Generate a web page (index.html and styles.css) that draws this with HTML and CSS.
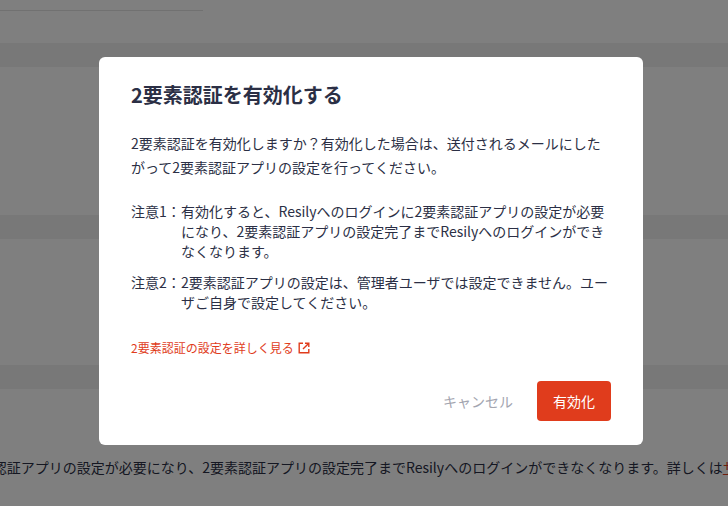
FILE: index.html
```html
<!DOCTYPE html>
<html lang="ja">
<head>
  <meta charset="UTF-8">
  <title>2要素認証</title>
  <link rel="stylesheet" href="styles.css">
</head>
<body>

  <!-- Page behind the modal -->
  <div class="page">
    <div class="top-rule"></div>
    <div class="band band-first"></div>
    <div class="band band-second"></div>
    <div class="band band-third"></div>
    <p class="page-note">2要素認証アプリの設定が必要になり、2要素認証アプリの設定完了までResilyへのログインができなくなります。詳しくは<a>サポート</a></p>
  </div>

  <!-- Modal -->
  <div class="overlay">
    <div class="modal">
      <h2>2要素認証を有効化する</h2>
      <p class="lead">2要素認証を有効化しますか？有効化した場合は、送付されるメールにしたがって2要素認証アプリの設定を行ってください。</p>
      <div class="note note-first">
        <span class="note-label">注意1：</span>
        <span>有効化すると、Resilyへのログインに2要素認証アプリの設定が必要になり、2要素認証アプリの設定完了までResilyへのログインができなくなります。</span>
      </div>
      <div class="note note-second">
        <span class="note-label">注意2：</span>
        <span>2要素認証アプリの設定は、管理者ユーザでは設定できません。ユーザご自身で設定してください。</span>
      </div>
      <a class="detail-link">2要素認証の設定を詳しく見る
        <svg width="12" height="12" viewBox="0 0 12 12" fill="none" stroke="#e03c1c" stroke-width="1.4">
          <path d="M5 1.2H1.2v9.6h9.6V7"/>
          <path d="M7 1.2h3.8V5M10.8 1.2L5 7"/>
        </svg>
      </a>
      <div class="actions">
        <button class="cancel">キャンセル</button>
        <button class="submit">有効化</button>
      </div>
    </div>
  </div>

</body>
</html>
```

FILE: styles.css
```css
html, body {
  margin: 0;
  height: 100%;
  overflow: hidden;
}
body {
  font-family: "Noto Sans CJK JP", "Noto Sans", sans-serif;
  background: #fff;
  color: #2b2f45;
}
.page {
  height: 506px;
  overflow: hidden;
  display: flex;
  flex-direction: column;
}
.top-rule {
  width: 203px;
  height: 1px;
  margin-top: 10px;
  background: #e2e2e2;
}
.band {
  height: 24px;
  flex-shrink: 0;
  background: #f0f0f0;
}
.band-first {
  margin-top: 32px;
}
.band-second {
  margin-top: 148px;
}
.band-third {
  margin-top: 126px;
}
.page-note {
  margin: 68px 0 0 -43px;
  font-size: 14px;
  line-height: 20px;
  white-space: nowrap;
}
.page-note a {
  color: #e03c1c;
  text-decoration: underline;
}
.overlay {
  box-sizing: border-box;
  position: absolute;
  top: 0;
  left: 0;
  width: 100%;
  height: 100%;
  padding: 0 0 4px 14px;
  background: rgba(0,0,0,0.5);
  display: flex;
  justify-content: center;
  align-items: center;
}
.modal {
  box-sizing: border-box;
  width: 544px;
  height: 388px;
  padding: 24px 32px;
  background: white;
  border-radius: 6px;
}
h2 {
  margin: 0;
  font-size: 20px;
  line-height: 28px;
  font-weight: 700;
}
.lead {
  margin: 22px 0 0;
  font-size: 14px;
  line-height: 24px;
}
.note {
  display: flex;
  font-size: 14px;
  line-height: 20px;
}
.note-first {
  margin-top: 22px;
}
.note-second {
  margin-top: 11px;
}
.note-label {
  flex-shrink: 0;
  width: 50px;
  white-space: nowrap;
}
.detail-link {
  display: flex;
  align-items: center;
  gap: 4px;
  margin-top: 27px;
  font-size: 12px;
  line-height: 18px;
  color: #e03c1c;
}
.actions {
  display: flex;
  justify-content: flex-end;
  align-items: center;
  gap: 24px;
  margin-top: 24px;
}
button {
  height: 40px;
  padding: 0;
  border: none;
  border-radius: 4px;
  font-family: inherit;
  font-size: 14px;
  cursor: pointer;
}
.cancel {
  background: none;
  color: #a3a5b0;
}
.submit {
  width: 74px;
  background: #e03c1c;
  color: white;
}
```
